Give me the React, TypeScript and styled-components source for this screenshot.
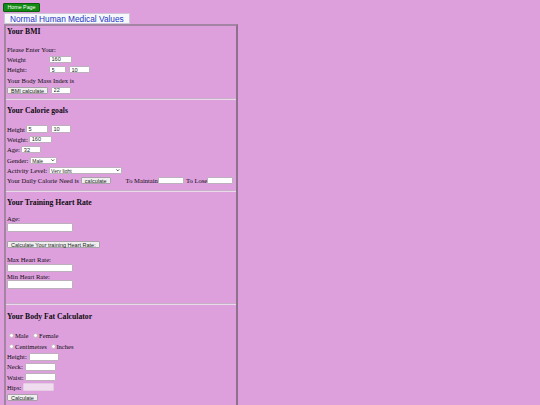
import React from "react";
import styled, { createGlobalStyle } from "styled-components";

const GlobalStyle = createGlobalStyle`
  html, body {
    background: #dda0dd;
  }
  body {
    margin: 3px;
    font-family: "Liberation Serif", "Times New Roman", serif;
    font-size: 6.6px;
    color: #100c10;
  }
`;

function App() {
  return (
    <>
      <GlobalStyle />
      <HomeButton>Home Page</HomeButton>
      <TitleBox>Normal Human Medical Values</TitleBox>

      <Panel>
        <Heading $mt={1}>Your BMI</Heading>
        <Row $mt={8}>Please Enter Your:</Row>
        <Row>
          <Label $w={42}>Weight</Label>
          <Input $w={23} defaultValue="160" />
        </Row>
        <Row>
          <Label $w={42}>Height:</Label>
          <Input $w={17} defaultValue="5" />
          <Input $w={21} $ml={3} defaultValue="10" />
        </Row>
        <Row>Your Body Mass Index is</Row>
        <Row>
          <Button>BMI calculate</Button>
          <Input $w={20} $ml={3} defaultValue="22" />
        </Row>

        <Rule $mt={3} />

        <Heading $mt={6}>Your Calorie goals</Heading>
        <Row $mt={8.5}>
          <Label>Height</Label>
          <Input $w={22} $ml={1} defaultValue="5" />
          <Input $w={20} $ml={3} defaultValue="10" />
        </Row>
        <Row>
          <Label>Weight:</Label>
          <Input $w={23} $ml={1.5} defaultValue="160" />
        </Row>
        <Row>
          <Label>Age:</Label>
          <Input $w={20} $ml={1.5} defaultValue="32" />
        </Row>
        <Row>
          <Label>Gender:</Label>
          <Dropdown $w={27} options={["Male", "Female"]} />
        </Row>
        <Row>
          <Label>Activity Level:</Label>
          <Dropdown
            $w={73}
            options={["Very light", "Light", "Moderate", "Heavy", "Very heavy"]}
          />
        </Row>
        <Row>
          <Label>Your Daily Calorie Need is</Label>
          <Button $ml={2}>calculate</Button>
          <Label $ml={15}>To Maintain</Label>
          <Input $w={26} />
          <Label $ml={2}>To Lose</Label>
          <Input $w={26} />
        </Row>

        <Rule $mt={4.5} />

        <Heading $mt={6}>Your Training Heart Rate</Heading>
        <Row $mt={7.5} $h={8}>Age:</Row>
        <Input $w={66} $h={9} $block />
        <Button $mt={9} $block>
          Calculate Your training Heart Rate:
        </Button>
        <Row $mt={7.5} $h={8}>Max Heart Rate:</Row>
        <Input $w={66} $h={8.5} $block />
        <Row $h={8}>Min Heart Rate:</Row>
        <Input $w={66} $h={9} $block />

        <Rule $mt={14} />

        <Heading $mt={7}>Your Body Fat Calculator</Heading>
        <Row $mt={9.5}>
          <Radio name="sex" $ml={2} />
          <Label $ml={1}>Male</Label>
          <Radio name="sex" $ml={4} />
          <Label $ml={1.5}>Female</Label>
        </Row>
        <Row>
          <Radio name="unit" $ml={2} />
          <Label $ml={1}>Centimetres</Label>
          <Radio name="unit" $ml={4} />
          <Label $ml={0.5}>Inches</Label>
        </Row>
        <Row>
          <Label>Height:</Label>
          <Input $w={30} $h={8} $ml={2} />
        </Row>
        <Row>
          <Label>Neck:</Label>
          <Input $w={31} $h={8} $ml={2} />
        </Row>
        <Row>
          <Label>Waist:</Label>
          <Input $w={31} $h={8} $ml={1.5} />
        </Row>
        <Row>
          <Label>Hips:</Label>
          <Input $w={31} $h={8} $ml={2} disabled />
        </Row>
        <Row>
          <Button>Calculate</Button>
        </Row>
        <Row $h={12}>
          <Label>Body Fat:</Label>
          <Input $w={30} $h={8} $ml={3} />
        </Row>
      </Panel>
    </>
  );
}

interface DropdownProps {
  $w: number;
  options: string[];
}

function Dropdown({ $w, options }: DropdownProps) {
  return (
    <SelectWrap $w={$w}>
      <Select>
        {options.map((o) => (
          <option key={o}>{o}</option>
        ))}
      </Select>
      <Chevron viewBox="0 0 10 6">
        <path d="M1 1 L5 5 L9 1" fill="none" stroke="#111" strokeWidth="2" />
      </Chevron>
    </SelectWrap>
  );
}

const HomeButton = styled.button`
  display: block;
  height: 9px;
  padding: 0 3.5px;
  background: #138a13;
  border: 1px solid #0b5e0b;
  border-radius: 1px;
  color: #fff;
  font-family: "Liberation Sans", Arial, sans-serif;
  font-size: 5.3px;
  line-height: 7px;
`;

const TitleBox = styled.div`
  box-sizing: border-box;
  width: 126px;
  height: 11px;
  margin: 1px 0 0 1px;
  padding: 0 5px;
  background: #f7f6fb;
  border: 1px solid #cfc8d6;
  color: #2336c4;
  font-family: "Liberation Sans", Arial, sans-serif;
  font-size: 8.3px;
  line-height: 10px;
  white-space: nowrap;
`;

const Panel = styled.div`
  box-sizing: border-box;
  width: 234px;
  min-height: 420px;
  margin-left: 1px;
  padding: 0 1px;
  border: 2px solid #a384a3;
  border-right-color: #8f708f;
`;

const Heading = styled.h3<{ $mt: number }>`
  margin: ${(p) => p.$mt}px 0 0;
  font-size: 7.7px;
  line-height: 9px;
  font-weight: bold;
  white-space: nowrap;
`;

const Row = styled.div<{ $mt?: number; $h?: number }>`
  display: flex;
  align-items: center;
  height: ${(p) => p.$h ?? 10.3}px;
  margin-top: ${(p) => p.$mt ?? 0}px;
  white-space: nowrap;
`;

const Label = styled.span<{ $w?: number; $ml?: number }>`
  flex: none;
  width: ${(p) => (p.$w ? `${p.$w}px` : "auto")};
  margin-left: ${(p) => p.$ml ?? 0}px;
`;

const Input = styled.input<{
  $w: number;
  $h?: number;
  $ml?: number;
  $block?: boolean;
}>`
  display: ${(p) => (p.$block ? "block" : "inline-block")};
  box-sizing: border-box;
  flex: none;
  width: ${(p) => p.$w}px;
  height: ${(p) => p.$h ?? 7.5}px;
  margin: 0 0 0 ${(p) => p.$ml ?? 0}px;
  padding: 0 1.5px;
  background: #fff;
  border: 0.6px solid #bdb0bd;
  border-radius: 1px;
  color: #2a2a2a;
  font-family: "Liberation Sans", Arial, sans-serif;
  font-size: 5.6px;
  outline: none;

  &:disabled {
    background: #efdcef;
    border-color: #e3cde3;
  }
`;

const Button = styled.button<{ $ml?: number; $mt?: number; $block?: boolean }>`
  display: ${(p) => (p.$block ? "block" : "inline-block")};
  flex: none;
  height: 7.5px;
  margin: ${(p) => p.$mt ?? 0}px 0 0 ${(p) => p.$ml ?? 0}px;
  padding: 0 3px;
  background: #efefef;
  border: 0.6px solid #a9a0a9;
  border-radius: 1px;
  color: #222;
  font-family: "Liberation Sans", Arial, sans-serif;
  font-size: 5.5px;
  line-height: 6px;
  white-space: nowrap;
`;

const SelectWrap = styled.span<{ $w: number }>`
  position: relative;
  display: inline-block;
  flex: none;
  width: ${(p) => p.$w}px;
  height: 7px;
  margin-left: 1.5px;
`;

const Select = styled.select`
  appearance: none;
  box-sizing: border-box;
  width: 100%;
  height: 100%;
  margin: 0;
  padding: 0 1.5px;
  background: #fff;
  border: 0.6px solid #bdb0bd;
  border-radius: 1px;
  color: #222;
  font-family: "Liberation Sans", Arial, sans-serif;
  font-size: 5px;
  line-height: 6px;
  outline: none;
`;

const Chevron = styled.svg`
  position: absolute;
  right: 2px;
  top: 2.3px;
  width: 3.6px;
  height: 2.3px;
  pointer-events: none;
`;

const Radio = styled.input.attrs({ type: "radio" })<{ $ml?: number }>`
  appearance: none;
  box-sizing: border-box;
  flex: none;
  width: 5px;
  height: 5px;
  margin: 0 0 0 ${(p) => p.$ml ?? 0}px;
  background: #fff;
  border: 0.6px solid #c8b4c8;
  border-radius: 50%;
`;

const Rule = styled.hr<{ $mt: number }>`
  height: 0;
  margin: ${(p) => p.$mt}px -1px 0;
  border: none;
  border-top: 1px solid #c8b1c8;
  border-bottom: 1px solid #ead9ea;
`;

export default App;
